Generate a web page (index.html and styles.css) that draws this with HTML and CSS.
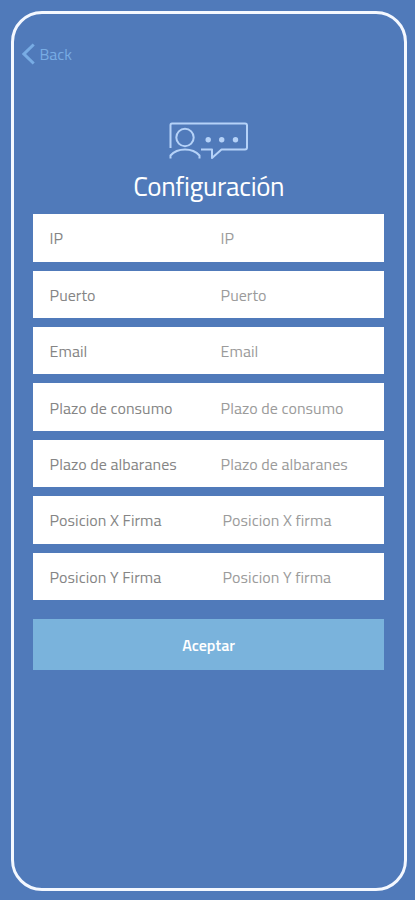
FILE: index.html
```html
<!DOCTYPE html>
<html lang="es">
<head>
<meta charset="utf-8">
<title>Configuración</title>
<link rel="stylesheet" href="styles.css">
</head>
<body>
<main class="screen">
  <a class="back"><svg class="chevron" viewBox="0 0 13 22"><path d="M11.7 1.500 2 11l9.700 9.500"/></svg><span>Back</span></a>
  <header class="heading">
    <svg class="logo" viewBox="0 0 80 38">
      <path d="M1.500 26V3q0-1.500 1.500-1.500H76q2 0 2 2V25.500q0 2-2 2H52.500L43 36V27.500H32"/>
      <circle cx="16" cy="15.500" r="8.700"/>
      <path d="M1.500 36.500v-3C5 29.500 10 27.500 16 27.500s11 2 14.500 6v3"/>
      <g class="dots"><circle cx="39.200" cy="17.700" r="2.700"/><circle cx="52.700" cy="17.700" r="2.700"/><circle cx="66.500" cy="17.700" r="2.700"/></g>
    </svg>
    <h1>Configuración</h1>
  </header>
  <form class="form">
    <div class="row first"><span>IP</span><span class="value">IP</span></div>
    <div class="row"><span>Puerto</span><span class="value">Puerto</span></div>
    <div class="row"><span>Email</span><span class="value">Email</span></div>
    <div class="row"><span>Plazo de consumo</span><span class="value">Plazo de consumo</span></div>
    <div class="row"><span>Plazo de albaranes</span><span class="value">Plazo de albaranes</span></div>
    <div class="row"><span>Posicion X Firma</span><span class="value inset">Posicion X firma</span></div>
    <div class="row"><span>Posicion Y Firma</span><span class="value inset">Posicion Y firma</span></div>
    <button type="button" class="accept">Aceptar</button>
  </form>
</main>
</body>
</html>
```
FILE: styles.css
```css
* { box-sizing: border-box; }
body {
  margin: 0;
  height: 900px;
  padding: 10.500px 8px 9px 10.500px;
  background: #507aba;
  font-family: "Titillium Web", "Noto Sans", sans-serif;
  overflow: hidden;
}
.screen {
  height: 880px;
  border: 3px solid #f4f8ff;
  border-radius: 31px;
  padding: 0 20px;
}
.back {
  display: flex;
  align-items: center;
  gap: 5px;
  height: 22px;
  margin: 29.500px 0 0 -12px;
  color: #78ace4;
  font-size: 16px;
}
.back span { padding-bottom: 1px; }
.chevron {
  width: 13px;
  height: 22px;
  fill: none;
  stroke: #78ace4;
  stroke-width: 3;
}
.heading {
  display: flex;
  flex-direction: column;
  align-items: center;
  margin-top: 56.500px;
}
.logo {
  width: 80px;
  height: 38px;
  fill: none;
  stroke: #b5d2f8;
  stroke-width: 2;
  stroke-linejoin: round;
}
.dots { fill: #b5d2f8; stroke: none; }
h1 {
  margin: 8px 0 0;
  height: 36px;
  line-height: 36px;
  font-size: 27px;
  font-weight: 400;
  letter-spacing: -0.350px;
  color: #fff;
}
.form {
  display: flex;
  flex-direction: column;
  gap: 9px;
  margin: 10.300px 0 0 -0.400px;
  width: 351px;
}
.row {
  display: grid;
  grid-template-columns: 171px 1fr;
  align-items: center;
  height: 47.350px;
  padding: 1px 0 0 16.500px;
  background: #fff;
  color: #858585;
  font-size: 16px;
  letter-spacing: 0.050px;
  white-space: nowrap;
}
.first { height: 48px; }
.value { color: #9b9b9b; }
.inset { padding-left: 2px; }
.accept {
  height: 51px;
  margin-top: 10px;
  padding: 1px 0 0;
  border: 0;
  background: #7ab3dc;
  color: #fff;
  font: 600 16px "Titillium Web", "Noto Sans", sans-serif;
}
```
